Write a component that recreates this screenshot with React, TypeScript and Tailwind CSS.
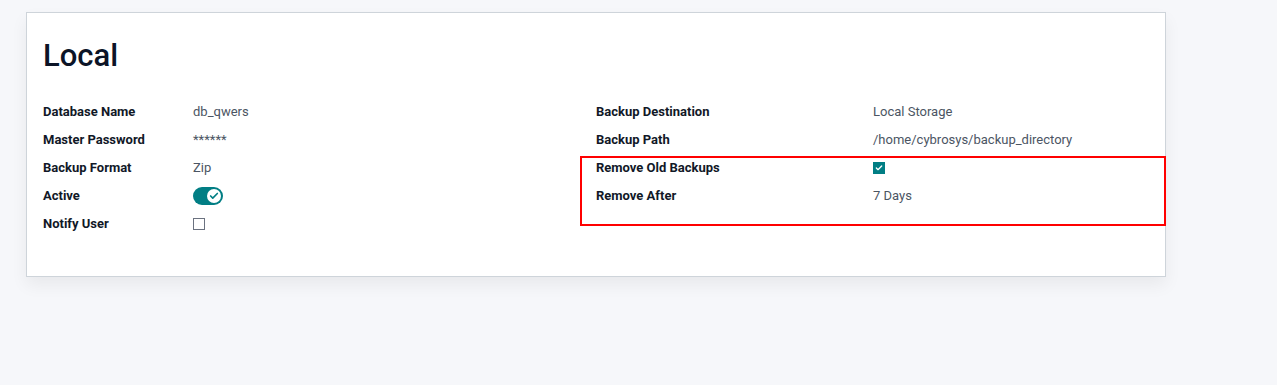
import { Check } from 'lucide-react';

type Row = { label: string; value: React.ReactNode };

function Toggle() {
  return (
    <span className="flex items-center w-[30px] h-[18px] rounded-full bg-[#017e84] justify-end pr-[2px]">
      <span className="flex items-center justify-center w-[14px] h-[14px] rounded-full bg-white">
        <Check size={10} strokeWidth={4} className="text-[#017e84]" />
      </span>
    </span>
  );
}

function Box({ checked }: { checked?: boolean }) {
  if (checked) {
    return (
      <span className="flex items-center justify-center w-[12px] h-[12px] bg-[#017e84]">
        <Check size={8} strokeWidth={4} className="text-white" />
      </span>
    );
  }
  return <span className="block w-[12px] h-[12px] border border-[#6b7280] bg-white" />;
}

const left: Row[] = [
  { label: 'Database Name', value: 'db_qwers' },
  { label: 'Master Password', value: '******' },
  { label: 'Backup Format', value: 'Zip' },
  { label: 'Active', value: <Toggle /> },
  { label: 'Notify User', value: <Box /> },
];

const right: Row[] = [
  { label: 'Backup Destination', value: 'Local Storage' },
  { label: 'Backup Path', value: '/home/cybrosys/backup_directory' },
  { label: 'Remove Old Backups', value: <Box checked /> },
  { label: 'Remove After', value: '7 Days' },
];

function Group({ rows, labelW }: { rows: Row[]; labelW: string }) {
  return (
    <div className="flex flex-col">
      {rows.map((r) => (
        <div key={r.label} className="flex items-center h-[28px]">
          <span className={`${labelW} shrink-0 font-bold text-[#111827]`}>{r.label}</span>
          <span className="flex items-center text-[#4b5563]">{r.value}</span>
        </div>
      ))}
    </div>
  );
}

export default function App() {
  return (
    <div
      className="min-h-[385px] bg-[#f6f7fa] pt-[12px] pl-[26px] text-[13px]"
      style={{ fontFamily: 'Roboto, "Liberation Sans", sans-serif' }}
    >
      <div className="relative w-[1140px] bg-white border border-[#ced4da] shadow-[0_8px_16px_rgba(0,0,0,0.06)] px-[16px] pt-[24px] pb-[38px]">
        <h1 className="text-[31px] leading-[38px] font-medium text-[#0c1427] mb-[23px]">Local</h1>
        <div className="grid grid-cols-2">
          <Group rows={left} labelW="w-[150px]" />
          <Group rows={right} labelW="w-[277px]" />
        </div>
        <div className="absolute left-[553px] top-[143px] w-[586px] h-[70px] border-2 border-[#ff0000]" />
      </div>
    </div>
  );
}
